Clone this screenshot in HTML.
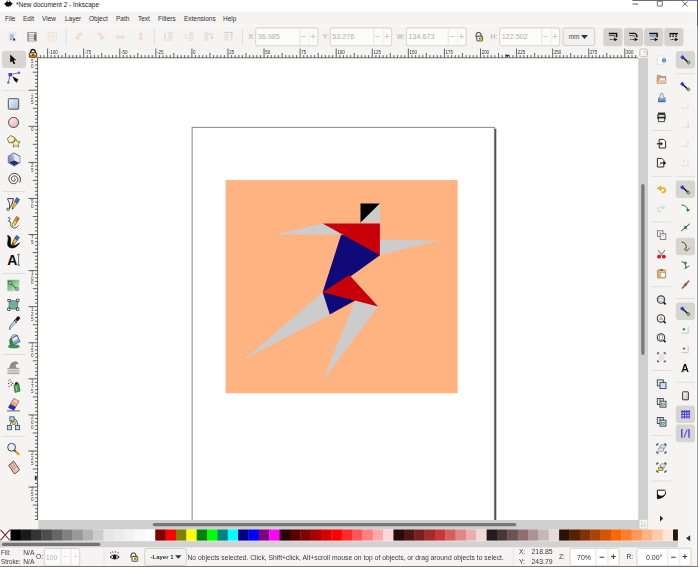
<!DOCTYPE html>
<html><head><meta charset="utf-8"><title>*New document 2 - Inkscape</title>
<style>
html,body{margin:0;padding:0;}
body{width:698px;height:567px;overflow:hidden;background:#f5f4f3;font-family:"Liberation Sans",sans-serif;position:relative;color:#2e3436;}
.a{position:absolute;}
.t{position:absolute;white-space:nowrap;line-height:1;}
.m{position:absolute;white-space:nowrap;line-height:1;font-size:6.9px;top:16px;color:#30302f;transform:scaleX(0.94);transform-origin:0 0;}
.sep{position:absolute;background:#e2e0dd;}
.fld{position:absolute;box-sizing:border-box;border:1px solid #d6d3cf;border-radius:2.5px;background:#fbfbfa;}
.btn{position:absolute;box-sizing:border-box;border-radius:3px;background:#d8d4d0;}
svg{position:absolute;overflow:visible;}
</style></head><body>

<svg style="left:0;top:0" width="698" height="567" viewBox="0 0 698 567"><rect x="0.00" y="0.00" width="698.00" height="12.00" fill="#fff"/><rect x="632.30" y="0.00" width="53.40" height="0.80" fill="#4a4a4a"/><rect x="685.70" y="0.00" width="12.30" height="1.00" fill="#7878f0"/></svg>
<svg style="left:4.1px;top:-0.9px" width="9" height="9" viewBox="0 0 11 10"><path d="M5.5 0.3 L10.3 5 Q10.8 5.8 9.8 6.2 L8.6 6.8 Q8 7.4 8.8 7.8 L7.4 8.6 L6.2 8 L5.2 9.6 L4 8.4 L2.4 8.8 Q1.6 8.2 2.6 7.4 L1 6.4 Q0.2 5.8 0.8 5 Z" fill="#111"/><path d="M5.5 0.6 L7.6 2.9 L6.4 2.7 L5.6 3.5 L4.8 2.6 L3.4 3Z" fill="#fff"/></svg>
<div class="t" style="left:16.2px;top:0.5px;font-size:7.3px;transform:scaleX(0.89);transform-origin:0 0;color:#222">*New document 2 - Inkscape</div>
<svg style="left:0;top:0" width="698" height="567" viewBox="0 0 698 567"><rect x="632.60" y="3.60" width="5.60" height="0.90" fill="#444"/></svg>
<svg style="left:0;top:0" width="698" height="12" viewBox="0 0 698 12"><rect x="657.3" y="1.2" width="5" height="4.9" rx="0.5" fill="none" stroke="#444" stroke-width="0.8"/><path d="M682.4 1.3 L687.5 6.5 M687.5 1.3 L682.4 6.5" stroke="#444" stroke-width="0.8" fill="none"/></svg>
<div class="m" style="left:4.5px">File</div>
<div class="m" style="left:23px">Edit</div>
<div class="m" style="left:42px">View</div>
<div class="m" style="left:64.5px">Layer</div>
<div class="m" style="left:88.5px">Object</div>
<div class="m" style="left:116px">Path</div>
<div class="m" style="left:137.5px">Text</div>
<div class="m" style="left:157.5px">Filters</div>
<div class="m" style="left:183.5px">Extensions</div>
<div class="m" style="left:222.5px">Help</div>
<svg style="left:0;top:0" width="698" height="567" viewBox="0 0 698 567"><rect x="0.00" y="25.30" width="698.00" height="0.90" fill="#fbfbfa"/><rect x="65.70" y="29.00" width="1.00" height="16.00" fill="#e2e0dd"/><rect x="153.90" y="29.00" width="1.00" height="16.00" fill="#e2e0dd"/><rect x="242.00" y="29.00" width="1.00" height="16.00" fill="#e2e0dd"/></svg>
<div class="t" style="left:248.3px;top:33.9px;font-size:6.8px;color:#a9a8a6">X:</div>
<svg style="left:0;top:0" width="698" height="567" viewBox="0 0 698 567"><rect x="255.70" y="27.90" width="62.30" height="17.90" rx="2.00" fill="#fbfbfa" stroke="#d6d3cf"/></svg>
<div class="t" style="left:257.8px;top:33px;font-size:7.2px;color:#b0afad">36.985</div>
<svg style="left:0;top:0" width="698" height="567" viewBox="0 0 698 567"><rect x="299.50" y="28.50" width="1.00" height="16.50" fill="#e6e4e1"/><rect x="308.80" y="28.50" width="1.00" height="16.50" fill="#f0eeec"/></svg>
<div class="t" style="left:300.9px;top:31.7px;font-size:10px;color:#cbc9c6">&#8722;</div>
<div class="t" style="left:310.3px;top:31.7px;font-size:10px;color:#cbc9c6">+</div>
<div class="t" style="left:322.8px;top:33.9px;font-size:6.8px;color:#a9a8a6">Y:</div>
<svg style="left:0;top:0" width="698" height="567" viewBox="0 0 698 567"><rect x="330.20" y="27.90" width="61.50" height="17.90" rx="2.00" fill="#fbfbfa" stroke="#d6d3cf"/></svg>
<div class="t" style="left:332.3px;top:33px;font-size:7.2px;color:#b0afad">53.276</div>
<svg style="left:0;top:0" width="698" height="567" viewBox="0 0 698 567"><rect x="373.20" y="28.50" width="1.00" height="16.50" fill="#e6e4e1"/><rect x="382.50" y="28.50" width="1.00" height="16.50" fill="#f0eeec"/></svg>
<div class="t" style="left:374.59999999999997px;top:31.7px;font-size:10px;color:#cbc9c6">&#8722;</div>
<div class="t" style="left:384.0px;top:31.7px;font-size:10px;color:#cbc9c6">+</div>
<div class="t" style="left:396.8px;top:33.9px;font-size:6.8px;color:#a9a8a6">W:</div>
<svg style="left:0;top:0" width="698" height="567" viewBox="0 0 698 567"><rect x="406.40" y="27.90" width="59.80" height="17.90" rx="2.00" fill="#fbfbfa" stroke="#d6d3cf"/></svg>
<div class="t" style="left:408.5px;top:33px;font-size:7.2px;color:#b0afad">134.673</div>
<svg style="left:0;top:0" width="698" height="567" viewBox="0 0 698 567"><rect x="447.70" y="28.50" width="1.00" height="16.50" fill="#e6e4e1"/><rect x="457.00" y="28.50" width="1.00" height="16.50" fill="#f0eeec"/></svg>
<div class="t" style="left:449.09999999999997px;top:31.7px;font-size:10px;color:#cbc9c6">&#8722;</div>
<div class="t" style="left:458.5px;top:31.7px;font-size:10px;color:#cbc9c6">+</div>
<div class="t" style="left:490.6px;top:33.9px;font-size:6.8px;color:#a9a8a6">H:</div>
<svg style="left:0;top:0" width="698" height="567" viewBox="0 0 698 567"><rect x="499.70" y="27.90" width="60.00" height="17.90" rx="2.00" fill="#fbfbfa" stroke="#d6d3cf"/></svg>
<div class="t" style="left:501.8px;top:33px;font-size:7.2px;color:#b0afad">122.502</div>
<svg style="left:0;top:0" width="698" height="567" viewBox="0 0 698 567"><rect x="541.20" y="28.50" width="1.00" height="16.50" fill="#e6e4e1"/><rect x="550.50" y="28.50" width="1.00" height="16.50" fill="#f0eeec"/></svg>
<div class="t" style="left:542.6px;top:31.7px;font-size:10px;color:#cbc9c6">&#8722;</div>
<div class="t" style="left:552.0px;top:31.7px;font-size:10px;color:#cbc9c6">+</div>
<svg style="left:0;top:0" width="698" height="567" viewBox="0 0 698 567"><rect x="563.10" y="28.00" width="31.60" height="17.50" rx="2.00" fill="#f3f2f0" stroke="#d2cfcb"/></svg>
<div class="t" style="left:568.8px;top:34px;font-size:6.4px;color:#444">mm</div>
<svg style="left:581px;top:34.5px" width="7" height="4" viewBox="0 0 7 4"><path d="M0 0 H7 L3.5 4 Z" fill="#2e3436"/></svg>
<svg style="left:0;top:0" width="698" height="567" viewBox="0 0 698 567"><rect x="603.30" y="28.00" width="19.20" height="18.20" rx="3.00" fill="#d6d2ce"/><rect x="623.90" y="28.00" width="19.20" height="18.20" rx="3.00" fill="#d6d2ce"/><rect x="644.10" y="28.00" width="19.20" height="18.20" rx="3.00" fill="#d6d2ce"/><rect x="664.20" y="28.00" width="19.20" height="18.20" rx="3.00" fill="#d6d2ce"/></svg>
<svg style="left:0;top:0" width="698" height="567" viewBox="0 0 698 567"><defs>
<linearGradient id="gb" x1="0" y1="0" x2="1" y2="1"><stop offset="0" stop-color="#f4f7fc"/><stop offset="1" stop-color="#9db4d6"/></linearGradient>
<linearGradient id="gp" x1="0" y1="0" x2="1" y2="1"><stop offset="0" stop-color="#fff4f4"/><stop offset="1" stop-color="#f2a8b0"/></linearGradient>
<linearGradient id="gg" x1="0" y1="0" x2="1" y2="1"><stop offset="0" stop-color="#3fa648"/><stop offset="1" stop-color="#d9efda"/></linearGradient>
<linearGradient id="gw" x1="0" y1="0" x2="1" y2="1"><stop offset="0" stop-color="#ffffff"/><stop offset="1" stop-color="#bdbdbd"/></linearGradient>
<linearGradient id="gy" x1="0" y1="0" x2="0" y2="1"><stop offset="0" stop-color="#ffe680"/><stop offset="1" stop-color="#e0a000"/></linearGradient>
<g id="snapn"><path d="M-2.6 -2.3 L3 2.7" stroke="#111" stroke-width="1.4"/><path d="M-3 -4.9 L-0.8 -2.7 L-3 -0.5 L-5.2 -2.7Z" fill="#3434ee"/><path d="M3 0.5 L5.2 2.7 L3 4.9 L0.8 2.7Z" fill="#2e8b3a"/><circle cx="3" cy="2.7" r="0.8" fill="#a8dcae"/></g>
<g id="mag"><circle cx="0" cy="0" r="3.7" fill="#eef2f8" stroke="#3a3f4a" stroke-width="1.1"/><path d="M2.6 2.8 L4.6 4.8" stroke="#111" stroke-width="1.6"/></g>
<g id="dup"><rect x="-4.3" y="-4.3" width="6" height="6" fill="#dfe9f5" stroke="#3a4250" stroke-width="0.9"/><rect x="-1.6" y="-1.6" width="6" height="6" fill="#cfe0f2" stroke="#3a4250" stroke-width="0.9"/></g>
<g id="grp"><path d="M-4.5 -2.8 V-4.5 H-2.8 M2.8 -4.5 H4.5 V-2.8 M4.5 2.8 V4.5 H2.8 M-2.8 4.5 H-4.5 V2.8" stroke="#222" stroke-width="1" fill="none"/></g>
<linearGradient id="gbx" x1="1" y1="0" x2="0" y2="1"><stop offset="0" stop-color="#c3cfe6"/><stop offset="1" stop-color="#5f72b2"/></linearGradient></defs><g transform="translate(12.2 36.8)"><rect x="-3.7" y="-4.8" width="7.4" height="9.6" rx="0.8" fill="#f0f0f4" stroke="#e2e2e6" stroke-width="0.5"/><rect x="-2.4" y="-3" width="4.2" height="5.4" fill="#aac2ee"/><rect x="1" y="1.8" width="1.9" height="1.9" fill="#222"/><rect x="-2.2" y="2" width="1.5" height="1.3" fill="#6a86c8"/></g><g transform="translate(32 36.8)"><rect x="-4.9" y="-4.7" width="9.8" height="9.4" rx="1" fill="#9a9a9a"/><rect x="-3.2" y="-3.8" width="5.6" height="7.6" fill="#f4f4f4"/><path d="M-3.2 -2 H2.4 M-3.2 0 H2.4 M-3.2 2 H2.4" stroke="#8a8a8a" stroke-width="0.7"/><rect x="2.3" y="-2.2" width="1.1" height="5.6" fill="#4a4a4a"/></g><g transform="translate(52.3 36.8)"><rect x="-4.2" y="-4.4" width="8.4" height="8.8" fill="#f4efea" stroke="#f2dfd0" stroke-width="0.8"/><path d="M0 -3 L3 0 L0 2.6 L-3 0Z" fill="#ecebea"/></g><g transform="translate(79 37)"><path d="M3 -3.4 Q-1.6 -3.2 -1.5 0.6" stroke="#efdccb" stroke-width="2.3" fill="none"/><path d="M-4.4 -0.2 H1.4 L-1.5 3.8Z" fill="#efdccb"/></g><g transform="translate(100.6 37)"><path d="M-3 -3.4 Q1.6 -3.2 1.5 0.6" stroke="#efdccb" stroke-width="2.3" fill="none"/><path d="M4.4 -0.2 H-1.4 L1.5 3.8Z" fill="#efdccb"/></g><g transform="translate(120.3 37)"><path d="M-4.8 0 L-1.6 -2.9 V2.9Z M4.8 0 L1.6 -2.9 V2.9Z" fill="#efdccb"/><rect x="-2" y="-1.1" width="4" height="2.2" fill="#efdccb"/></g><g transform="translate(140.8 36.6)"><path d="M0 -4.6 L-2.9 -1.5 H2.9Z M0 4.6 L-2.9 1.5 H2.9Z" fill="#efdccb"/><rect x="-1.1" y="-2" width="2.2" height="4" fill="#efdccb"/></g><g transform="translate(168.2 36.6)"><path d="M0 -4 H4.4 M0 -2.2 H4.4 M0 -0.4 H4.4 M0 1.4 H4.4" stroke="#d9d9d9" stroke-width="1"/><path d="M-3.2 -4 V1" stroke="#cfcfcf" stroke-width="0.9"/><path d="M-4.4 0.4 H-2 L-3.2 2Z" fill="#c8c8c8"/><path d="M-4.6 3.4 H4.4" stroke="#f0ddc8" stroke-width="1.1"/></g><g transform="translate(188.8 36.6)"><path d="M0.4 -4 H4.4 M0.4 -2.2 H4.4 M0.4 -0.4 H4.4 M0.4 3.6 H4.4" stroke="#d9d9d9" stroke-width="1"/><path d="M-3 -3 V0" stroke="#cfcfcf" stroke-width="0.9"/><path d="M-4.4 1.6 H4.4" stroke="#f0ddc8" stroke-width="1.1"/></g><g transform="translate(208.8 36.6)"><path d="M-4.4 -4 H-0.6 M-4.4 -0.4 H-0.6 M-4.4 1.4 H-0.6 M-4.4 3.4 H-0.6" stroke="#d9d9d9" stroke-width="1"/><path d="M-4.4 -2.2 H4.4" stroke="#dcdcdc" stroke-width="1.1"/><path d="M3 -1 V2" stroke="#cfcfcf" stroke-width="0.9"/><path d="M1.8 1 H4.2 L3 2.6Z" fill="#c8c8c8"/></g><g transform="translate(228.8 36.6)"><path d="M-4.4 -4.2 H4.4" stroke="#d0d0d0" stroke-width="1.1"/><path d="M-4.4 -2.2 H-0.4 M-4.4 -0.4 H-0.4 M-4.4 1.4 H-0.4 M-4.4 3.4 H-0.4" stroke="#d9d9d9" stroke-width="1"/><path d="M3 -2 V3.6" stroke="#cfcfcf" stroke-width="0.9"/><path d="M1.8 -1.6 H4.2 L3 -3.2Z" fill="#c8c8c8"/></g><g transform="translate(479.4 37)"><path d="M-3.2 0 V-2.6 Q-3 -4.6 -0.6 -4.6 Q1.7 -4.6 1.9 -1" stroke="#2a2a2a" stroke-width="1" fill="none"/><rect x="-2.6" y="-0.8" width="5.8" height="4.7" rx="0.6" fill="#fff" stroke="#2a2a2a" stroke-width="0.9"/><rect x="0.7" y="0" width="2.1" height="3.4" fill="#e8c61e"/><rect x="-0.3" y="0.9" width="1.1" height="1.5" fill="#222"/></g><g transform="translate(613 36.6)"><path d="M-4.2 -3.2 H3.6 V0.6" stroke="#111" stroke-width="1.5" fill="none"/><path d="M-4.2 -1 H1.6 V0.6" stroke="#555" stroke-width="1" fill="none"/><path d="M-3.2 2.9 H1.6" stroke="#222" stroke-width="0.9" stroke-dasharray="1 0.5"/><path d="M1.2 1.1 L4.6 2.9 L1.2 4.7Z" fill="#111"/></g><g transform="translate(633.4 36.6)"><path d="M-4.2 -3.2 H0.6 Q3.6 -3.2 3.6 0.6" stroke="#111" stroke-width="1.4" fill="none"/><path d="M-4.2 -1 H-0.4 Q1.6 -1 1.6 0.6" stroke="#555" stroke-width="1" fill="none"/><path d="M-3.2 2.9 H1.6" stroke="#222" stroke-width="0.9" stroke-dasharray="1 0.5"/><path d="M1.2 1.1 L4.6 2.9 L1.2 4.7Z" fill="#111"/></g><g transform="translate(653.5 36.6)"><rect x="-4" y="-1.6" width="6.4" height="2.2" fill="#7ba7de"/><path d="M-4.2 -3.2 H3.6 V0.6" stroke="#111" stroke-width="1.5" fill="none"/><path d="M-3.2 2.9 H1.6" stroke="#222" stroke-width="0.9" stroke-dasharray="1 0.5"/><path d="M1.2 1.1 L4.6 2.9 L1.2 4.7Z" fill="#111"/></g><g transform="translate(673.7 36.6)"><path d="M-4.2 -3 H4.2" stroke="#111" stroke-width="1.4"/><path d="M-3.4 -2.4 V0.4 M-0.6 -2.4 V0.4 M2.4 -2.4 V0.4" stroke="#111" stroke-width="1.5" stroke-dasharray="1.2 0.5"/><path d="M-3.2 2.9 H1.6" stroke="#222" stroke-width="0.9" stroke-dasharray="1 0.5"/><path d="M1.2 1.1 L4.6 2.9 L1.2 4.7Z" fill="#111"/></g></svg>
<svg style="left:0;top:0" width="698" height="567" viewBox="0 0 698 567"><rect x="2.10" y="50.70" width="24.00" height="17.20" rx="3.00" fill="#d8d4d0"/><rect x="2.50" y="90.20" width="23.00" height="1.00" fill="#e0deda"/><rect x="2.50" y="191.00" width="23.00" height="1.00" fill="#e0deda"/><rect x="2.50" y="273.00" width="23.00" height="1.00" fill="#e0deda"/><rect x="2.50" y="354.00" width="23.00" height="1.00" fill="#e0deda"/><rect x="2.50" y="436.00" width="23.00" height="1.00" fill="#e0deda"/></svg>
<svg style="left:0;top:0" width="698" height="567" viewBox="0 0 698 567"><g transform="translate(0 0)"><path d="M10.2 54.4 L10.2 62.6 L12.1 60.9 L13.7 64.3 L15.2 63.6 L13.6 60.3 L16.3 60.2Z" fill="#0a0a0a"/></g><g transform="translate(0 0)"><path d="M10.2 74.6 L18.6 72.8 M10.2 74.6 L8.3 82.4" stroke="#444" stroke-width="0.7"/><rect x="8.5" y="73" width="3.5" height="3.3" fill="#3a3af0"/><circle cx="19" cy="72.7" r="1.2" fill="#5a5af0"/><circle cx="8.3" cy="82.6" r="1.2" fill="#5a5af0"/><path d="M12.4 76.2 L18.4 79.4 L16.6 82.8 L14.4 80.6Z" fill="#0a0a0a"/></g><rect x="8.3" y="98.7" width="10.4" height="10.5" rx="0.6" fill="url(#gb)" stroke="#3c3c3c" stroke-width="0.85"/><circle cx="13.6" cy="122.4" r="5" fill="url(#gp)" stroke="#303030" stroke-width="0.9"/><path d="M10.6 135.5 L14.8 137.6 L14.2 142.2 L9.2 143 L7.3 138.8Z" fill="#f6eeaa" stroke="#4a4a38" stroke-width="0.7"/><path d="M10 138 L12.8 138.6 L12.4 141.2 L10 141.4Z" fill="#f4f3f0"/><path d="M15.8 138.8 L17.2 141.5 L20.3 141.9 L18.1 144 L18.7 147 L15.9 145.6 L13.2 147.1 L13.7 144.1 L11.5 142 L14.5 141.5Z" fill="#f2dc60" stroke="#4a4a38" stroke-width="0.6"/><path d="M15.8 141.2 L16.6 142.6 L18.2 142.9 L17 144 L17.3 145.4 L15.9 144.7 L14.6 145.4 L14.9 144 L13.8 142.9 L15.2 142.6Z" fill="#fdf9cc"/><path d="M13.8 152.9 L19.8 156.2 V162.8 L14.2 166 L8.3 162.6 V156.2Z" fill="#e3eaf5" stroke="#44464e" stroke-width="0.8" stroke-linejoin="round"/><path d="M13.8 153.2 L14.4 159.4 L14.2 165.6 L8.6 162.4 V156.3Z" fill="url(#gbx)"/><path d="M9.4 162.5 L14.3 160.5 L19 162.7 L14.2 165.5Z" fill="#2a2a72"/><path d="M14.4 159.4 L19.5 156.6 V162.3Z" fill="#dfe7f3"/><path d="M14.40 178.51 L14.56 178.54 L14.72 178.60 L14.88 178.70 L15.02 178.84 L15.14 179.01 L15.23 179.22 L15.28 179.45 L15.28 179.69 L15.24 179.95 L15.14 180.20 L14.99 180.44 L14.79 180.66 L14.55 180.85 L14.26 180.99 L13.94 181.08 L13.59 181.11 L13.24 181.08 L12.88 180.98 L12.54 180.80 L12.22 180.57 L11.94 180.27 L11.72 179.91 L11.56 179.51 L11.47 179.07 L11.46 178.61 L11.54 178.14 L11.70 177.69 L11.95 177.26 L12.28 176.87 L12.69 176.54 L13.15 176.28 L13.67 176.10 L14.23 176.02 L14.80 176.04 L15.38 176.16 L15.93 176.39 L16.44 176.72 L16.90 177.15 L17.28 177.66 L17.57 178.24 L17.75 178.88 L17.83 179.55 L17.77 180.24 L17.60 180.92 L17.30 181.56 L16.88 182.16 L16.36 182.68 L15.74 183.11 L15.04 183.42 L14.29 183.61 L13.50 183.67 L12.70 183.58 L11.92 183.35 L11.18 182.98 L10.51 182.47 L9.93 181.85 L9.46 181.12 L9.12 180.30 L8.93 179.43 L8.90 178.53 L9.02 177.62 L9.32 176.74 L9.76 175.91 L10.36 175.16 L11.09 174.52 L11.93 174.01 L12.86 173.66 L13.85 173.47 L14.87 173.46 L15.89 173.64 L16.87 173.99 L17.79 174.52 L18.61 175.21 L19.30 176.05 L19.84 177.00 L20.20 178.05 L20.38 179.16 L20.36 180.29 L20.14 181.42 L19.72 182.50" fill="none" stroke="#303030" stroke-width="0.95"/><path d="M7.6 198.6 H13.4 C12.6 203 11.4 206.6 9 208.6 L7.6 209.6" fill="none" stroke="#222" stroke-width="0.9"/><path d="M7.4 198.6 Q10.6 203.6 9.6 208.6" fill="none" stroke="#222" stroke-width="0.8"/><rect x="7" y="208.2" width="2.2" height="2" fill="#fff" stroke="#222" stroke-width="0.6"/><path d="M16.6 197.6 L19.6 199.6 L17.4 203.4 L14.6 201.4Z" fill="#3a6fd0" stroke="#1c2c50" stroke-width="0.5"/><path d="M14.6 201.4 L17.4 203.4 L13 208.6 L12.2 208.2Z" fill="#f1c232" stroke="#4a3a10" stroke-width="0.5"/><path d="M12.6 207.4 L13.6 208 L11.6 210Z" fill="#111"/><path d="M7.8 218.2 Q9.6 216.6 10 218.4 Q10.2 220 8.4 221.2 Q11 221 10.6 223.6 Q10.2 227 13.4 228 Q16.8 228.6 18.6 225.4" fill="none" stroke="#333" stroke-width="0.8"/><path d="M16.6 216.4 L19.2 218.2 L15 225.4 L12.4 226.2 L12.6 223.4Z" fill="#f6d33c" stroke="#3a2a10" stroke-width="0.6"/><path d="M17.4 217 L19.2 218.2 L17 222 L15 220.8Z" fill="#e8641a"/><path d="M12.6 223.6 L14.8 225.2 L12.4 226.2Z" fill="#f3e3c3"/><path d="M7.6 235.4 Q11.4 236.4 10.6 240.6 Q9.8 244.6 12 245.4 Q15.4 246.2 19.6 243 Q15.6 248.8 10.6 247.8 Q6.6 246.6 8 241 Q8.8 237.4 7.6 235.4Z" fill="#0a0a0a" stroke="#0a0a0a" stroke-width="0.7"/><path d="M16.4 235.4 L19.4 237.2 L17.6 240 L14.6 238.4Z" fill="#3a6fd0" stroke="#1c2c50" stroke-width="0.5"/><path d="M14.6 238.4 L17.6 240 L14.4 244 L12.4 244.8 L12.6 242.4Z" fill="#f1c232" stroke="#3a2a10" stroke-width="0.6"/><path d="M12.6 242.6 L14.2 243.8 L12.2 245Z" fill="#b01818"/><text x="7.3" y="264.6" font-size="14" font-weight="bold" fill="#0a0a0a" font-family="Liberation Sans, sans-serif">A</text><path d="M18.6 254.6 V265 M17.3 254.4 H19.9 M17.3 265.2 H19.9" stroke="#333" stroke-width="0.7" fill="none"/><rect x="7.4" y="279.8" width="12" height="11.4" fill="url(#gg)"/><path d="M10 283 L17 289" stroke="#333" stroke-width="0.8"/><rect x="8.9" y="281.8" width="2.2" height="2.2" fill="#e8e8e8" stroke="#333" stroke-width="0.6"/><rect x="15.9" y="287.9" width="2.2" height="2.2" fill="#e8e8e8" stroke="#333" stroke-width="0.6"/><path d="M9.4 300.4 L18 301 L17.4 309.2 L8.8 308.8Z" fill="#68ad9f" stroke="#2a4a44" stroke-width="0.6"/><path d="M11.4 300.6 L17.8 306 M8.9 304 L15 309.1" stroke="#7fc2b4" stroke-width="0.6"/><rect x="7.9" y="299.3" width="2.3" height="2.3" fill="#fff" stroke="#222" stroke-width="0.7"/><rect x="16.7" y="299.2" width="2.3" height="2.3" fill="#fff" stroke="#222" stroke-width="0.7"/><rect x="16.6" y="308" width="2.3" height="2.3" fill="#fff" stroke="#222" stroke-width="0.7"/><rect x="7.7" y="308.1" width="2.3" height="2.3" fill="#fff" stroke="#222" stroke-width="0.7"/><path d="M17.4 316.4 Q19.8 316 20.2 318.4 L17.4 321.6 L15 319.4Z" fill="#1a1a1a"/><path d="M14.4 319.6 L17.2 322.2 L16.4 323 L13.6 320.4Z" fill="#333"/><path d="M14.4 320.8 L16.2 322.4 L11 327.6 L9.8 328.8 L9.4 328.4 L10 326Z" fill="#cfdff2" stroke="#334" stroke-width="0.6"/><circle cx="9.8" cy="329" r="0.9" fill="#5b86c8"/><ellipse cx="13.8" cy="346.4" rx="5.6" ry="1.6" fill="#3ca24a" stroke="#1e5a28" stroke-width="0.5"/><path d="M10.6 338.4 L17.2 335.2 L20 341.6 L13.6 344.8Z" fill="#7fa8dc" stroke="#2a3f5c" stroke-width="0.7"/><path d="M11.4 339 L16.8 336.4 L18 339 L12.6 341.8Z" fill="#e2ecf8"/><path d="M10.6 338.4 Q8.6 339.6 10.6 345.8 L12.6 345.6 Q11.6 341.6 12.2 339.4Z" fill="#2f8f3f" stroke="#1e5a28" stroke-width="0.5"/><path d="M11 337 Q13 333.6 16.6 335" fill="none" stroke="#445" stroke-width="0.7"/><path d="M7.4 368.4 H19.4 M7.4 370.2 H19.4 M7.4 372 H19.4 M7.4 373.6 H19.4" stroke="#9a9a9a" stroke-width="0.9"/><path d="M9.4 368.6 Q9.6 361.8 15 361.2 Q18.6 361.4 18.2 364.4 Q16.8 363.4 15.8 364.4 Q15 365.8 17.4 368.6Z" fill="#8c8c8c"/><path d="M14 385.2 L18.6 383.6 L20 391 L15.2 392.4Z" fill="#3fae43" stroke="#1e4a22" stroke-width="0.7"/><path d="M14.6 385 L15.2 382.4 L17.4 381.8 L18 383.8Z" fill="#2a2a2a"/><path d="M16 386 L16.8 391.4" stroke="#a8e0aa" stroke-width="0.8"/><path d="M8.4 380.8 h1 M10.4 382.2 h1.2 M8 383.6 h1.2 M10.6 385 h1.4 M8.6 386.6 h1 M12 383.4 h1.2 M9.6 379.6 h0.8" stroke="#222" stroke-width="0.9"/><path d="M13.8 398.4 L19 401.2 L15.6 407.2 L10.2 404.4Z" fill="#f3a48a" stroke="#5a3a3a" stroke-width="0.5"/><path d="M10.2 404.4 L15.6 407.2 L13.8 410.2 L8.4 407.4Z" fill="#1f2fd8" stroke="#15206a" stroke-width="0.5"/><path d="M14.6 399.4 L18 401.2 L16.6 403.4 L13.2 401.6Z" fill="#f9cdb8"/><path d="M7 410.9 H20" stroke="#222" stroke-width="0.7"/><path d="M11.8 421 L9.4 426 M14 419 Q17.6 419.4 17.6 425.6" stroke="#222" stroke-width="0.8" fill="none"/><rect x="9.9" y="416.8" width="4.2" height="4.2" fill="#bcd4f0" stroke="#2a3a5a" stroke-width="0.7"/><rect x="7.3" y="425.6" width="4.2" height="4.2" fill="#bcd4f0" stroke="#2a3a5a" stroke-width="0.7"/><rect x="15.5" y="425.6" width="4.2" height="4.2" fill="#bcd4f0" stroke="#2a3a5a" stroke-width="0.7"/><rect x="12.3" y="421.8" width="3" height="2.6" fill="#f1d23a" stroke="#5a4a10" stroke-width="0.5"/><path d="M14.4 450.2 L18.6 454.2" stroke="#e8901a" stroke-width="2.2" stroke-linecap="round"/><path d="M13.6 449.6 L15.4 451.4" stroke="#444" stroke-width="1.6"/><circle cx="11.6" cy="447.3" r="3.9" fill="#e4eefa" stroke="#3a4456" stroke-width="1"/><path d="M9.4 446.4 Q10 444.6 12 444.6" stroke="#fff" stroke-width="0.9" fill="none"/><path d="M8.6 465.4 L13.6 461 L19.6 469.8 L14.6 474Z" fill="#f2c6ae" stroke="#3a3030" stroke-width="0.8"/><path d="M10.4 464 L11.8 465.6 M12 462.6 L13 463.8 M11.6 466.2 L13.4 468.2 M13.6 464.8 L14.6 466 M12.8 468 L14.6 470.2 M14.8 466.6 L15.8 467.8" stroke="#5a4040" stroke-width="0.6"/></svg>
<svg style="left:0;top:0;will-change:transform" width="698" height="567" viewBox="0 0 698 567">
<rect x="37.3" y="57.5" width="600.5" height="1" fill="#3a3a3a"/>
<rect x="37.3" y="57.5" width="1" height="462.5" fill="#3a3a3a"/>
<path d="M40.38 57.8V55.10M43.99 57.8V55.10M47.60 57.8V48.50M51.21 57.8V55.10M54.81 57.8V55.10M58.42 57.8V55.10M62.03 57.8V55.10M65.64 57.8V52.90M69.25 57.8V55.10M72.85 57.8V55.10M76.46 57.8V55.10M80.07 57.8V55.10M83.67 57.8V48.50M87.28 57.8V55.10M90.89 57.8V55.10M94.50 57.8V55.10M98.11 57.8V55.10M101.71 57.8V52.90M105.32 57.8V55.10M108.93 57.8V55.10M112.53 57.8V55.10M116.14 57.8V55.10M119.75 57.8V48.50M123.36 57.8V55.10M126.97 57.8V55.10M130.57 57.8V55.10M134.18 57.8V55.10M137.79 57.8V52.90M141.40 57.8V55.10M145.00 57.8V55.10M148.61 57.8V55.10M152.22 57.8V55.10M155.82 57.8V48.50M159.43 57.8V55.10M163.04 57.8V55.10M166.65 57.8V55.10M170.25 57.8V55.10M173.86 57.8V52.90M177.47 57.8V55.10M181.08 57.8V55.10M184.69 57.8V55.10M188.29 57.8V55.10M191.90 57.8V48.50M195.51 57.8V55.10M199.12 57.8V55.10M202.72 57.8V55.10M206.33 57.8V55.10M209.94 57.8V52.90M213.55 57.8V55.10M217.15 57.8V55.10M220.76 57.8V55.10M224.37 57.8V55.10M227.98 57.8V48.50M231.58 57.8V55.10M235.19 57.8V55.10M238.80 57.8V55.10M242.41 57.8V55.10M246.01 57.8V52.90M249.62 57.8V55.10M253.23 57.8V55.10M256.84 57.8V55.10M260.44 57.8V55.10M264.05 57.8V48.50M267.66 57.8V55.10M271.26 57.8V55.10M274.87 57.8V55.10M278.48 57.8V55.10M282.09 57.8V52.90M285.69 57.8V55.10M289.30 57.8V55.10M292.91 57.8V55.10M296.52 57.8V55.10M300.12 57.8V48.50M303.73 57.8V55.10M307.34 57.8V55.10M310.95 57.8V55.10M314.56 57.8V55.10M318.16 57.8V52.90M321.77 57.8V55.10M325.38 57.8V55.10M328.99 57.8V55.10M332.59 57.8V55.10M336.20 57.8V48.50M339.81 57.8V55.10M343.42 57.8V55.10M347.02 57.8V55.10M350.63 57.8V55.10M354.24 57.8V52.90M357.85 57.8V55.10M361.45 57.8V55.10M365.06 57.8V55.10M368.67 57.8V55.10M372.27 57.8V48.50M375.88 57.8V55.10M379.49 57.8V55.10M383.10 57.8V55.10M386.71 57.8V55.10M390.31 57.8V52.90M393.92 57.8V55.10M397.53 57.8V55.10M401.13 57.8V55.10M404.74 57.8V55.10M408.35 57.8V48.50M411.96 57.8V55.10M415.57 57.8V55.10M419.17 57.8V55.10M422.78 57.8V55.10M426.39 57.8V52.90M430.00 57.8V55.10M433.60 57.8V55.10M437.21 57.8V55.10M440.82 57.8V55.10M444.43 57.8V48.50M448.03 57.8V55.10M451.64 57.8V55.10M455.25 57.8V55.10M458.86 57.8V55.10M462.46 57.8V52.90M466.07 57.8V55.10M469.68 57.8V55.10M473.28 57.8V55.10M476.89 57.8V55.10M480.50 57.8V48.50M484.11 57.8V55.10M487.72 57.8V55.10M491.32 57.8V55.10M494.93 57.8V55.10M498.54 57.8V52.90M502.14 57.8V55.10M505.75 57.8V55.10M509.36 57.8V55.10M512.97 57.8V55.10M516.58 57.8V48.50M520.18 57.8V55.10M523.79 57.8V55.10M527.40 57.8V55.10M531.00 57.8V55.10M534.61 57.8V52.90M538.22 57.8V55.10M541.83 57.8V55.10M545.44 57.8V55.10M549.04 57.8V55.10M552.65 57.8V48.50M556.26 57.8V55.10M559.87 57.8V55.10M563.47 57.8V55.10M567.08 57.8V55.10M570.69 57.8V52.90M574.30 57.8V55.10M577.90 57.8V55.10M581.51 57.8V55.10M585.12 57.8V55.10M588.73 57.8V48.50M592.33 57.8V55.10M595.94 57.8V55.10M599.55 57.8V55.10M603.15 57.8V55.10M606.76 57.8V52.90M610.37 57.8V55.10M613.98 57.8V55.10M617.59 57.8V55.10M621.19 57.8V55.10M624.80 57.8V48.50M628.41 57.8V55.10M632.01 57.8V55.10M635.62 57.8V55.10" stroke="#262626" stroke-width="0.7" fill="none"/>
<text x="48.8" y="53.8" font-size="4.45" fill="#333" font-family="Liberation Sans, sans-serif">-100</text>
<text x="84.9" y="53.8" font-size="4.45" fill="#333" font-family="Liberation Sans, sans-serif">-75</text>
<text x="121.0" y="53.8" font-size="4.45" fill="#333" font-family="Liberation Sans, sans-serif">-50</text>
<text x="157.0" y="53.8" font-size="4.45" fill="#333" font-family="Liberation Sans, sans-serif">-25</text>
<text x="193.1" y="53.8" font-size="4.45" fill="#333" font-family="Liberation Sans, sans-serif">0</text>
<text x="229.2" y="53.8" font-size="4.45" fill="#333" font-family="Liberation Sans, sans-serif">25</text>
<text x="265.2" y="53.8" font-size="4.45" fill="#333" font-family="Liberation Sans, sans-serif">50</text>
<text x="301.3" y="53.8" font-size="4.45" fill="#333" font-family="Liberation Sans, sans-serif">75</text>
<text x="337.4" y="53.8" font-size="4.45" fill="#333" font-family="Liberation Sans, sans-serif">100</text>
<text x="373.5" y="53.8" font-size="4.45" fill="#333" font-family="Liberation Sans, sans-serif">125</text>
<text x="409.6" y="53.8" font-size="4.45" fill="#333" font-family="Liberation Sans, sans-serif">150</text>
<text x="445.6" y="53.8" font-size="4.45" fill="#333" font-family="Liberation Sans, sans-serif">175</text>
<text x="481.7" y="53.8" font-size="4.45" fill="#333" font-family="Liberation Sans, sans-serif">200</text>
<text x="517.8" y="53.8" font-size="4.45" fill="#333" font-family="Liberation Sans, sans-serif">225</text>
<text x="553.9" y="53.8" font-size="4.45" fill="#333" font-family="Liberation Sans, sans-serif">250</text>
<text x="589.9" y="53.8" font-size="4.45" fill="#333" font-family="Liberation Sans, sans-serif">275</text>
<text x="626.0" y="53.8" font-size="4.45" fill="#333" font-family="Liberation Sans, sans-serif">300</text>
<path d="M37.7 61.37H35.00M37.7 64.97H35.00M37.7 68.58H35.00M37.7 72.19H32.80M37.7 75.79H35.00M37.7 79.40H35.00M37.7 83.01H35.00M37.7 86.62H35.00M37.7 90.22H28.40M37.7 93.83H35.00M37.7 97.44H35.00M37.7 101.05H35.00M37.7 104.66H35.00M37.7 108.26H32.80M37.7 111.87H35.00M37.7 115.48H35.00M37.7 119.08H35.00M37.7 122.69H35.00M37.7 126.30H28.40M37.7 129.91H35.00M37.7 133.51H35.00M37.7 137.12H35.00M37.7 140.73H35.00M37.7 144.34H32.80M37.7 147.94H35.00M37.7 151.55H35.00M37.7 155.16H35.00M37.7 158.77H35.00M37.7 162.38H28.40M37.7 165.98H35.00M37.7 169.59H35.00M37.7 173.20H35.00M37.7 176.81H35.00M37.7 180.41H32.80M37.7 184.02H35.00M37.7 187.63H35.00M37.7 191.23H35.00M37.7 194.84H35.00M37.7 198.45H28.40M37.7 202.06H35.00M37.7 205.66H35.00M37.7 209.27H35.00M37.7 212.88H35.00M37.7 216.49H32.80M37.7 220.09H35.00M37.7 223.70H35.00M37.7 227.31H35.00M37.7 230.92H35.00M37.7 234.53H28.40M37.7 238.13H35.00M37.7 241.74H35.00M37.7 245.35H35.00M37.7 248.96H35.00M37.7 252.56H32.80M37.7 256.17H35.00M37.7 259.78H35.00M37.7 263.39H35.00M37.7 266.99H35.00M37.7 270.60H28.40M37.7 274.21H35.00M37.7 277.82H35.00M37.7 281.42H35.00M37.7 285.03H35.00M37.7 288.64H32.80M37.7 292.25H35.00M37.7 295.85H35.00M37.7 299.46H35.00M37.7 303.07H35.00M37.7 306.68H28.40M37.7 310.28H35.00M37.7 313.89H35.00M37.7 317.50H35.00M37.7 321.11H35.00M37.7 324.71H32.80M37.7 328.32H35.00M37.7 331.93H35.00M37.7 335.54H35.00M37.7 339.14H35.00M37.7 342.75H28.40M37.7 346.36H35.00M37.7 349.97H35.00M37.7 353.57H35.00M37.7 357.18H35.00M37.7 360.79H32.80M37.7 364.40H35.00M37.7 368.00H35.00M37.7 371.61H35.00M37.7 375.22H35.00M37.7 378.83H28.40M37.7 382.43H35.00M37.7 386.04H35.00M37.7 389.65H35.00M37.7 393.25H35.00M37.7 396.86H32.80M37.7 400.47H35.00M37.7 404.08H35.00M37.7 407.69H35.00M37.7 411.29H35.00M37.7 414.90H28.40M37.7 418.51H35.00M37.7 422.12H35.00M37.7 425.72H35.00M37.7 429.33H35.00M37.7 432.94H32.80M37.7 436.55H35.00M37.7 440.15H35.00M37.7 443.76H35.00M37.7 447.37H35.00M37.7 450.98H28.40M37.7 454.58H35.00M37.7 458.19H35.00M37.7 461.80H35.00M37.7 465.41H35.00M37.7 469.01H32.80M37.7 472.62H35.00M37.7 476.23H35.00M37.7 479.84H35.00M37.7 483.44H35.00M37.7 487.05H28.40M37.7 490.66H35.00M37.7 494.27H35.00M37.7 497.87H35.00M37.7 501.48H35.00M37.7 505.09H32.80M37.7 508.70H35.00M37.7 512.30H35.00M37.7 515.91H35.00M37.7 519.52H35.00" stroke="#262626" stroke-width="0.7" fill="none"/>
<text x="32.3" y="63.2" text-anchor="middle" font-size="4.6" fill="#3a3a3a" font-family="Liberation Sans, sans-serif">5</text>
<text x="32.3" y="68.0" text-anchor="middle" font-size="4.6" fill="#3a3a3a" font-family="Liberation Sans, sans-serif">0</text>
<text x="32.3" y="94.6" text-anchor="middle" font-size="4.6" fill="#3a3a3a" font-family="Liberation Sans, sans-serif">-</text>
<text x="32.3" y="99.3" text-anchor="middle" font-size="4.6" fill="#3a3a3a" font-family="Liberation Sans, sans-serif">2</text>
<text x="32.3" y="104.0" text-anchor="middle" font-size="4.6" fill="#3a3a3a" font-family="Liberation Sans, sans-serif">5</text>
<text x="32.3" y="130.7" text-anchor="middle" font-size="4.6" fill="#3a3a3a" font-family="Liberation Sans, sans-serif">0</text>
<text x="32.3" y="166.8" text-anchor="middle" font-size="4.6" fill="#3a3a3a" font-family="Liberation Sans, sans-serif">2</text>
<text x="32.3" y="171.5" text-anchor="middle" font-size="4.6" fill="#3a3a3a" font-family="Liberation Sans, sans-serif">5</text>
<text x="32.3" y="202.9" text-anchor="middle" font-size="4.6" fill="#3a3a3a" font-family="Liberation Sans, sans-serif">5</text>
<text x="32.3" y="207.6" text-anchor="middle" font-size="4.6" fill="#3a3a3a" font-family="Liberation Sans, sans-serif">0</text>
<text x="32.3" y="238.9" text-anchor="middle" font-size="4.6" fill="#3a3a3a" font-family="Liberation Sans, sans-serif">7</text>
<text x="32.3" y="243.6" text-anchor="middle" font-size="4.6" fill="#3a3a3a" font-family="Liberation Sans, sans-serif">5</text>
<text x="32.3" y="275.0" text-anchor="middle" font-size="4.6" fill="#3a3a3a" font-family="Liberation Sans, sans-serif">1</text>
<text x="32.3" y="279.7" text-anchor="middle" font-size="4.6" fill="#3a3a3a" font-family="Liberation Sans, sans-serif">0</text>
<text x="32.3" y="284.4" text-anchor="middle" font-size="4.6" fill="#3a3a3a" font-family="Liberation Sans, sans-serif">0</text>
<text x="32.3" y="311.1" text-anchor="middle" font-size="4.6" fill="#3a3a3a" font-family="Liberation Sans, sans-serif">1</text>
<text x="32.3" y="315.8" text-anchor="middle" font-size="4.6" fill="#3a3a3a" font-family="Liberation Sans, sans-serif">2</text>
<text x="32.3" y="320.5" text-anchor="middle" font-size="4.6" fill="#3a3a3a" font-family="Liberation Sans, sans-serif">5</text>
<text x="32.3" y="347.2" text-anchor="middle" font-size="4.6" fill="#3a3a3a" font-family="Liberation Sans, sans-serif">1</text>
<text x="32.3" y="351.9" text-anchor="middle" font-size="4.6" fill="#3a3a3a" font-family="Liberation Sans, sans-serif">5</text>
<text x="32.3" y="356.6" text-anchor="middle" font-size="4.6" fill="#3a3a3a" font-family="Liberation Sans, sans-serif">0</text>
<text x="32.3" y="383.2" text-anchor="middle" font-size="4.6" fill="#3a3a3a" font-family="Liberation Sans, sans-serif">1</text>
<text x="32.3" y="387.9" text-anchor="middle" font-size="4.6" fill="#3a3a3a" font-family="Liberation Sans, sans-serif">7</text>
<text x="32.3" y="392.6" text-anchor="middle" font-size="4.6" fill="#3a3a3a" font-family="Liberation Sans, sans-serif">5</text>
<text x="32.3" y="419.3" text-anchor="middle" font-size="4.6" fill="#3a3a3a" font-family="Liberation Sans, sans-serif">2</text>
<text x="32.3" y="424.0" text-anchor="middle" font-size="4.6" fill="#3a3a3a" font-family="Liberation Sans, sans-serif">0</text>
<text x="32.3" y="428.7" text-anchor="middle" font-size="4.6" fill="#3a3a3a" font-family="Liberation Sans, sans-serif">0</text>
<text x="32.3" y="455.4" text-anchor="middle" font-size="4.6" fill="#3a3a3a" font-family="Liberation Sans, sans-serif">2</text>
<text x="32.3" y="460.1" text-anchor="middle" font-size="4.6" fill="#3a3a3a" font-family="Liberation Sans, sans-serif">2</text>
<text x="32.3" y="464.8" text-anchor="middle" font-size="4.6" fill="#3a3a3a" font-family="Liberation Sans, sans-serif">5</text>
<text x="32.3" y="491.4" text-anchor="middle" font-size="4.6" fill="#3a3a3a" font-family="Liberation Sans, sans-serif">2</text>
<text x="32.3" y="496.1" text-anchor="middle" font-size="4.6" fill="#3a3a3a" font-family="Liberation Sans, sans-serif">5</text>
<text x="32.3" y="500.8" text-anchor="middle" font-size="4.6" fill="#3a3a3a" font-family="Liberation Sans, sans-serif">0</text>
<path d="M504.9 54.8 h4.6 l-2.3 2.5z" fill="#222"/>
<path d="M34.8 475.6 v4.6 l2.5 -2.3z" fill="#222"/>
</svg>
<svg style="left:0;top:0" width="698" height="567" viewBox="0 0 698 567"><g transform="translate(33 53.5)"><path d="M-2.3 -0.4 V-1.6 Q-2.3 -4 0 -4 Q2.3 -4 2.3 -1.6 V-0.4" stroke="#151515" stroke-width="1.3" fill="none"/><rect x="-3.7" y="-0.8" width="7.4" height="4.6" rx="0.5" fill="url(#gy)" stroke="#1a1a1a" stroke-width="0.8"/><rect x="-3" y="1.6" width="6" height="1.6" fill="#d06a10"/><rect x="-0.6" y="0.2" width="1.2" height="2" fill="#2a1a00"/></g></svg>
<svg style="left:0;top:0" width="698" height="567" viewBox="0 0 698 567"><defs><clipPath id="cv"><rect x="38.2" y="58.4" width="600" height="461.6"/></clipPath></defs><rect x="38.2" y="58.4" width="600" height="461.6" fill="#fff"/><g clip-path="url(#cv)">
<rect x="494.4" y="128.8" width="1.9" height="400" fill="#505050"/>
<rect x="192.1" y="127.3" width="302.2" height="430" fill="#fff" stroke="#6a6a6a" stroke-width="0.8"/>
<rect x="225.6" y="180.1" width="232.1" height="213.2" fill="#ffb380"/>
<polygon points="360.5,203.4 380.0,203.4 360.5,222.8" fill="#000"/>
<polygon points="380.0,203.4 380.0,222.8 360.5,222.8" fill="#cccccc"/>
<polygon points="322.7,223.5 336.0,226.0 341.1,234.8 276.5,234.2" fill="#cccccc"/>
<polygon points="379.9,239.4 438.0,240.4 379.9,255.2" fill="#cccccc"/>
<polygon points="322.7,292.3 326.0,300.0 329.8,314.5 244.6,359.3" fill="#cccccc"/>
<polygon points="355.2,300.4 366.0,301.0 378.1,306.4 322.8,380.6" fill="#cccccc"/>
<polygon points="341.1,234.8 370.0,240.0 379.9,255.2 350.5,276.5 340.0,290.0 322.7,292.3" fill="#0f0a78"/>
<polygon points="322.7,292.3 340.0,293.0 355.2,300.4 329.8,314.5" fill="#0f0a78"/>
<polygon points="322.7,223.5 379.9,223.5 379.9,255.2" fill="#c8000a"/>
<polygon points="349.3,275.0 378.1,306.4 322.7,292.3" fill="#c8000a"/>
</g></svg>
<svg style="left:0;top:0" width="698" height="567" viewBox="0 0 698 567"><rect x="638.30" y="58.00" width="9.70" height="462.00" fill="#cfcfcf"/><rect x="641.20" y="184.00" width="3.30" height="171.00" rx="2.00" fill="#787878"/><rect x="38.30" y="520.00" width="609.70" height="9.40" fill="#cfcfcf"/><rect x="152.60" y="523.00" width="363.90" height="3.20" rx="2.00" fill="#787878"/><rect x="639.80" y="49.00" width="7.70" height="7.70" rx="1.50" fill="#f7f6f5" stroke="#c2bfbb"/></svg>
<svg style="left:0;top:0" width="698" height="567" viewBox="0 0 698 567"><rect x="639.6" y="519.8" width="7.8" height="8.8" fill="#f4f4f2"/><path d="M641.6 521.6 L645.8 524.2 L641.6 526.8Z" fill="none" stroke="#b8dcc0" stroke-width="0.7"/><circle cx="645" cy="525.8" r="1" fill="#f4c8c8"/><circle cx="642" cy="526.2" r="0.9" fill="#c8d4f4"/><path d="M643.4 52.8 a1.6 1.6 0 1 1 1.6 1.6" stroke="#b8b8b8" stroke-width="0.7" fill="none"/></svg>
<svg style="left:0;top:0" width="698" height="567" viewBox="0 0 698 567"><rect x="651.50" y="130.00" width="20.00" height="1.00" fill="#e0deda"/><rect x="651.50" y="175.80" width="20.00" height="1.00" fill="#e0deda"/><rect x="651.50" y="221.50" width="20.00" height="1.00" fill="#e0deda"/><rect x="651.50" y="286.20" width="20.00" height="1.00" fill="#e0deda"/><rect x="651.50" y="370.00" width="20.00" height="1.00" fill="#e0deda"/><rect x="651.50" y="435.00" width="20.00" height="1.00" fill="#e0deda"/><rect x="651.50" y="480.60" width="20.00" height="1.00" fill="#e0deda"/><rect x="676.00" y="73.20" width="19.00" height="1.00" fill="#e0deda"/><rect x="676.00" y="175.80" width="19.00" height="1.00" fill="#e0deda"/><rect x="676.00" y="298.00" width="19.00" height="1.00" fill="#e0deda"/><rect x="676.00" y="381.80" width="19.00" height="1.00" fill="#e0deda"/><rect x="675.80" y="50.90" width="19.20" height="17.60" rx="3.00" fill="#d8d4d0"/><rect x="675.80" y="180.50" width="19.20" height="17.60" rx="3.00" fill="#d8d4d0"/><rect x="675.80" y="237.70" width="19.20" height="17.60" rx="3.00" fill="#d8d4d0"/><rect x="675.80" y="302.50" width="19.20" height="17.60" rx="3.00" fill="#d8d4d0"/><rect x="675.80" y="405.40" width="19.20" height="17.60" rx="3.00" fill="#d8d4d0"/><rect x="675.80" y="424.60" width="19.20" height="17.60" rx="3.00" fill="#d8d4d0"/></svg>
<svg style="left:0;top:0" width="698" height="567" viewBox="0 0 698 567"><path d="M657.4 56 H662.2 L663.8 57.6 V64.6 H657.4Z" fill="#fdfdfd" stroke="#dcdcde" stroke-width="0.7"/><circle cx="664" cy="60.4" r="2.1" fill="#3f78c4"/><circle cx="664" cy="60.4" r="0.9" fill="#bcd4f2"/><path d="M657.2 75.4 H660.4 L661.2 76.6 H665.8 V83.2 H657.2Z" fill="#caa283" stroke="#a8806a" stroke-width="0.7"/><path d="M659.6 78.2 H665 V80.6 H659.6Z" fill="#f4efe8"/><path d="M657.4 83 L658.6 80 H666 L665.6 83Z" fill="#e6c9a4"/><path d="M660.6 93.4 H662.8 L663.6 97.6 H665.2 L661.7 100 L658.2 97.6 H659.8Z" fill="#e4e6e8" stroke="#70747a" stroke-width="0.6"/><rect x="658" y="98.6" width="7.6" height="3.6" fill="#2f6db4"/><path d="M658.4 100 H665.2" stroke="#d8e8f8" stroke-width="0.7"/><path d="M657.8 102.8 H665.8" stroke="#ccd" stroke-width="0.6"/><rect x="658" y="112.6" width="7" height="1.7" fill="#222"/><rect x="657.3" y="114.2" width="8.4" height="5" rx="0.5" fill="#2c2c2c"/><rect x="658.6" y="115.1" width="5.8" height="1.7" fill="#e4e4e4"/><rect x="658.7" y="118" width="5.6" height="3.7" fill="#fff" stroke="#222" stroke-width="0.8"/><rect x="660.6" y="118.6" width="1.8" height="0.8" fill="#58c058"/><path d="M659.2 139.4 H663.6 L665.6 141.4 V148 H659.2Z" fill="#fafafa" stroke="#1a1a1a" stroke-width="0.9"/><path d="M656.8 143.8 H661.2" stroke="#111" stroke-width="1"/><path d="M660.6 141.8 L663 143.8 L660.6 145.8Z" fill="#111"/><path d="M657.4 158.4 H661.8 L663.8 160.4 V167 H657.4Z" fill="#fafafa" stroke="#1a1a1a" stroke-width="0.9"/><path d="M660 163 H664.4" stroke="#111" stroke-width="1"/><path d="M663.8 161 L666.2 163 L663.8 165Z" fill="#111"/><path d="M658.6 164.6 H661" stroke="#999" stroke-width="0.6"/><path d="M660.4 188.2 H663 Q665.6 188.4 665.4 190.6 Q665 192.6 661.6 192.4" fill="none" stroke="#e3b91c" stroke-width="1.7"/><path d="M661 185.8 V190.8 L657.2 188.3Z" fill="#e8c422" stroke="#b8900c" stroke-width="0.4"/><path d="M662.6 207.4 H660 Q657.4 207.6 657.6 209.8 Q658 211.6 661 211.4" fill="none" stroke="#cfe6cf" stroke-width="1.5"/><path d="M662 205.2 V209.8 L665.8 207.5Z" fill="#cfe6cf"/><rect x="657.4" y="230.8" width="5.6" height="5.6" fill="#f6f6f6" stroke="#6a6a6e" stroke-width="0.8"/><rect x="660.2" y="233.8" width="5.6" height="5.6" fill="#f6f6f6" stroke="#6a6a6e" stroke-width="0.8"/><path d="M659 232.6 h2 M662 235.8 h2" stroke="#999" stroke-width="0.6"/><path d="M658 250.2 L662.6 255.8 M665 250.2 L660.4 255.8" stroke="#8a8f94" stroke-width="1.1"/><circle cx="659.1" cy="256.7" r="1.9" fill="#d8141c"/><circle cx="663.9" cy="256.7" r="1.9" fill="#d8141c"/><rect x="657.4" y="270" width="8.2" height="8" rx="0.6" fill="#f0c48c" stroke="#a87838" stroke-width="0.7"/><rect x="659.8" y="269" width="3.4" height="1.8" fill="#777"/><rect x="660.8" y="272.6" width="4.4" height="4.8" fill="#fbfbfb" stroke="#888" stroke-width="0.5"/><path d="M658.8 271 V277.6" stroke="#c88a3a" stroke-width="0.8"/><use href="#mag" x="661" y="299.6"/><rect x="658.8" y="298.2" width="4.4" height="2.8" fill="#fff" stroke="#778" stroke-width="0.5"/><use href="#mag" x="661" y="318.4"/><path d="M659.4 319.4 L661 316.6 L662.8 319.6Z" fill="#f1d03a" stroke="#776" stroke-width="0.4"/><use href="#mag" x="661" y="337.4"/><rect x="659.6" y="335" width="3" height="4.4" fill="#fff" stroke="#556" stroke-width="0.5"/><rect x="658.6" y="353.8" width="5.6" height="7" fill="#e2e4e8"/><path d="M657.6 354.4 V352.8 H659.2 M663.6 352.8 H665.2 V354.4 M665.2 360.2 V361.8 H663.6 M659.2 361.8 H657.6 V360.2" stroke="#222" stroke-width="0.9" fill="none"/><use href="#dup" x="661.6" y="384.2"/><use href="#dup" x="661.6" y="402.8"/><rect x="661.4" y="403.4" width="3" height="2" fill="#f1d03a" stroke="#5a4a10" stroke-width="0.4"/><path d="M659 400 h2.4" stroke="#334" stroke-width="0.7"/><use href="#dup" x="661.6" y="421.8"/><rect x="661.6" y="422.4" width="2.8" height="1.8" fill="#8fd08f" stroke="#2a5a2a" stroke-width="0.4"/><path d="M659 419 h2.4" stroke="#334" stroke-width="0.7"/><ellipse cx="662.6" cy="446.8" rx="2.8" ry="2.2" fill="#cfe0f4" stroke="#667" stroke-width="0.5"/><rect x="658.8" y="448" width="4.6" height="3.2" fill="#dbe6f4" stroke="#667" stroke-width="0.5"/><use href="#grp" x="661.4" y="448.5"/><ellipse cx="662.8" cy="465.8" rx="2.6" ry="2.2" fill="#cfe0f4" stroke="#667" stroke-width="0.5"/><rect x="658.6" y="467.4" width="4.4" height="3" fill="#f1cf3a" stroke="#6a5a10" stroke-width="0.5"/><use href="#grp" x="661.4" y="467.5"/><path d="M659.6 465.4 L663.4 469.8" stroke="#444" stroke-width="0.5"/><path d="M657.4 490.2 H665.4 V494 Q663.8 498 657.4 498.6Z" fill="#fff" stroke="#111" stroke-width="1"/><path d="M657.4 498.6 V493.4 Q660 497.4 665 494.4 Q663.2 498 657.4 498.6Z" fill="#111"/><path d="M664 490.2 L666 490.2 L666 492.2Z" fill="#e8b81c"/><path d="M660 515.4 L663.2 518.5 L660 521.6Z" fill="#2a2a2a"/><use href="#snapn" x="685.5" y="59.9"/><use href="#snapn" x="685.3" y="86.7"/><path d="M681.4 108.2 H688 V101.8" stroke="#dcdcdc" stroke-width="0.8" fill="none"/><path d="M681.4 127 H688.2 V120.4" stroke="#dcdcdc" stroke-width="0.8" fill="none"/><circle cx="688.2" cy="127" r="1.1" fill="#d6d6d6"/><path d="M681.4 146.4 H688 V141" stroke="#dcdcdc" stroke-width="0.8" fill="none"/><path d="M688 139.8 l1.1 1.4 h-2.2z" fill="#d3dde8"/><path d="M681.4 165.6 H688 V159.6" stroke="#dcdcdc" stroke-width="0.8" fill="none"/><circle cx="683.6" cy="161.2" r="1" fill="#d3dde8"/><use href="#snapn" x="685.3" y="189.9"/><path d="M681.4 205 Q687.2 205.4 687.8 210" fill="none" stroke="#26862f" stroke-width="1"/><path d="M686 209 L690 209.2 L687.8 212.2Z" fill="#26862f"/><path d="M681.2 231 L689.8 223.8" stroke="#222" stroke-width="0.9"/><path d="M683.8 225.8 L687.2 229.4" stroke="#333" stroke-width="0.6"/><path d="M685.5 225.8 L687.2 227.5 L685.5 229.2 L683.8 227.5Z" fill="#2e8b3a"/><path d="M681.6 242 Q686.6 242.6 686.2 248" fill="none" stroke="#333" stroke-width="0.9"/><path d="M686.4 251.6 L690 247.6" stroke="#333" stroke-width="0.7"/><path d="M685.5 247.4 L687.3 249.2 L685.5 251 L683.7 249.2Z" fill="#2e8b3a"/><circle cx="685.5" cy="249.2" r="0.6" fill="#c0e8c4"/><path d="M681.6 261.6 Q686 262.6 686.2 268.4" fill="none" stroke="#333" stroke-width="0.9"/><path d="M684.4 268.6 L689.6 265.8" stroke="#333" stroke-width="0.7"/><path d="M685.5 261.2 L687.2 262.9 L685.5 264.6 L683.8 262.9Z" fill="#2e8b3a"/><path d="M682 288.6 L689 280.8" stroke="#d23446" stroke-width="1.5"/><path d="M685.5 282.8 L687.3 284.7 L685.5 286.6 L683.7 284.7Z" fill="#2e8b3a"/><use href="#snapn" x="685.3" y="311.3"/><path d="M681.4 333.2 H688.2 V326.6" stroke="#bdbdbd" stroke-width="0.8" fill="none"/><circle cx="683.9" cy="329.3" r="1.2" fill="#2e9a40"/><path d="M681.4 352.6 H688.2 V345.8" stroke="#bdbdbd" stroke-width="0.8" fill="none"/><path d="M682.6 348.6 h2.8 M684 347.2 v2.8" stroke="#444" stroke-width="0.7"/><text x="681.2" y="371.6" font-size="10.6" font-weight="bold" fill="#0a0a0a" font-family="Liberation Sans, sans-serif">A</text><path d="M681 372.2 L684.6 371" stroke="#2e9a40" stroke-width="0.9"/><rect x="682.6" y="391.8" width="5.8" height="8" rx="0.5" fill="url(#gw)" stroke="#2a2a2a" stroke-width="0.9"/><path d="M681.2 411.6 H690 M681.2 414.3 H690 M681.2 417 H690" stroke="#3434ea" stroke-width="1.1"/><path d="M682 410 V418.6 M684.4 410 V418.6 M686.8 410 V418.6 M689.2 410 V418.6" stroke="#3434ea" stroke-width="0.9"/><path d="M681.8 429 V437.8 M689 429 V437.8" stroke="#3a3aea" stroke-width="1.3"/><path d="M687.2 429.6 L684 437.4" stroke="#4a4aea" stroke-width="1.1"/></svg>
<svg style="left:0;top:0" width="698" height="567" viewBox="0 0 698 567"><defs><clipPath id="pl"><rect x="0" y="529.3" width="677.9" height="11.5"/></clipPath></defs><g clip-path="url(#pl)">
<rect x="10.30" y="529.3" width="10.66" height="11.5" fill="#000000"/>
<rect x="20.66" y="529.3" width="10.66" height="11.5" fill="#1a1a1a"/>
<rect x="31.01" y="529.3" width="10.66" height="11.5" fill="#333333"/>
<rect x="41.37" y="529.3" width="10.66" height="11.5" fill="#4d4d4d"/>
<rect x="51.72" y="529.3" width="10.66" height="11.5" fill="#666666"/>
<rect x="62.08" y="529.3" width="10.66" height="11.5" fill="#808080"/>
<rect x="72.43" y="529.3" width="10.66" height="11.5" fill="#999999"/>
<rect x="82.78" y="529.3" width="10.66" height="11.5" fill="#b3b3b3"/>
<rect x="93.14" y="529.3" width="10.66" height="11.5" fill="#cccccc"/>
<rect x="103.50" y="529.3" width="10.66" height="11.5" fill="#e6e6e6"/>
<rect x="113.85" y="529.3" width="10.66" height="11.5" fill="#ececec"/>
<rect x="124.20" y="529.3" width="10.66" height="11.5" fill="#f2f2f2"/>
<rect x="134.56" y="529.3" width="10.66" height="11.5" fill="#f9f9f9"/>
<rect x="144.92" y="529.3" width="10.66" height="11.5" fill="#ffffff"/>
<rect x="155.27" y="529.3" width="10.66" height="11.5" fill="#800000"/>
<rect x="165.63" y="529.3" width="10.66" height="11.5" fill="#ff0000"/>
<rect x="175.98" y="529.3" width="10.66" height="11.5" fill="#808000"/>
<rect x="186.34" y="529.3" width="10.66" height="11.5" fill="#ffff00"/>
<rect x="196.69" y="529.3" width="10.66" height="11.5" fill="#008000"/>
<rect x="207.05" y="529.3" width="10.66" height="11.5" fill="#00ff00"/>
<rect x="217.40" y="529.3" width="10.66" height="11.5" fill="#008080"/>
<rect x="227.76" y="529.3" width="10.66" height="11.5" fill="#00ffff"/>
<rect x="238.11" y="529.3" width="10.66" height="11.5" fill="#000080"/>
<rect x="248.47" y="529.3" width="10.66" height="11.5" fill="#0000ff"/>
<rect x="258.82" y="529.3" width="10.66" height="11.5" fill="#800080"/>
<rect x="269.18" y="529.3" width="10.66" height="11.5" fill="#ff00ff"/>
<rect x="279.53" y="529.3" width="10.66" height="11.5" fill="#2b0000"/>
<rect x="289.89" y="529.3" width="10.66" height="11.5" fill="#550000"/>
<rect x="300.24" y="529.3" width="10.66" height="11.5" fill="#800000"/>
<rect x="310.60" y="529.3" width="10.66" height="11.5" fill="#aa0000"/>
<rect x="320.95" y="529.3" width="10.66" height="11.5" fill="#d40000"/>
<rect x="331.31" y="529.3" width="10.66" height="11.5" fill="#ff0000"/>
<rect x="341.66" y="529.3" width="10.66" height="11.5" fill="#ff2a2a"/>
<rect x="352.02" y="529.3" width="10.66" height="11.5" fill="#ff5555"/>
<rect x="362.37" y="529.3" width="10.66" height="11.5" fill="#ff8080"/>
<rect x="372.73" y="529.3" width="10.66" height="11.5" fill="#ffaaaa"/>
<rect x="383.08" y="529.3" width="10.66" height="11.5" fill="#ffd5d5"/>
<rect x="393.44" y="529.3" width="10.66" height="11.5" fill="#280b0b"/>
<rect x="403.79" y="529.3" width="10.66" height="11.5" fill="#501616"/>
<rect x="414.15" y="529.3" width="10.66" height="11.5" fill="#782121"/>
<rect x="424.50" y="529.3" width="10.66" height="11.5" fill="#a02c2c"/>
<rect x="434.86" y="529.3" width="10.66" height="11.5" fill="#c83737"/>
<rect x="445.21" y="529.3" width="10.66" height="11.5" fill="#d35f5f"/>
<rect x="455.57" y="529.3" width="10.66" height="11.5" fill="#de8787"/>
<rect x="465.92" y="529.3" width="10.66" height="11.5" fill="#e9afaf"/>
<rect x="476.28" y="529.3" width="10.66" height="11.5" fill="#f4d7d7"/>
<rect x="486.63" y="529.3" width="10.66" height="11.5" fill="#241c1c"/>
<rect x="496.99" y="529.3" width="10.66" height="11.5" fill="#483737"/>
<rect x="507.34" y="529.3" width="10.66" height="11.5" fill="#6c5353"/>
<rect x="517.70" y="529.3" width="10.66" height="11.5" fill="#916f6f"/>
<rect x="528.05" y="529.3" width="10.66" height="11.5" fill="#ac9393"/>
<rect x="538.40" y="529.3" width="10.66" height="11.5" fill="#c8b7b7"/>
<rect x="548.76" y="529.3" width="10.66" height="11.5" fill="#e3dbdb"/>
<rect x="559.12" y="529.3" width="10.66" height="11.5" fill="#2b1100"/>
<rect x="569.47" y="529.3" width="10.66" height="11.5" fill="#552200"/>
<rect x="579.82" y="529.3" width="10.66" height="11.5" fill="#803300"/>
<rect x="590.18" y="529.3" width="10.66" height="11.5" fill="#aa4400"/>
<rect x="600.53" y="529.3" width="10.66" height="11.5" fill="#d45500"/>
<rect x="610.89" y="529.3" width="10.66" height="11.5" fill="#ff6600"/>
<rect x="621.25" y="529.3" width="10.66" height="11.5" fill="#ff7f2a"/>
<rect x="631.60" y="529.3" width="10.66" height="11.5" fill="#ff9955"/>
<rect x="641.95" y="529.3" width="10.66" height="11.5" fill="#ffb380"/>
<rect x="652.31" y="529.3" width="10.66" height="11.5" fill="#ffccaa"/>
<rect x="662.66" y="529.3" width="10.66" height="11.5" fill="#ffe6d5"/>
<rect x="673.02" y="529.3" width="10.66" height="11.5" fill="#28170b"/>
<rect x="0" y="529.3" width="10.3" height="11.5" fill="#fbfbfb"/><path d="M0.3 529.6 L10 540.5 M10 529.6 L0.3 540.5" stroke="#8b1a1a" stroke-width="1.1"/>
</g></svg>
<svg style="left:0;top:0" width="698" height="567" viewBox="0 0 698 567"><rect x="0.00" y="541.20" width="678.00" height="6.10" fill="#d2d2d2"/><rect x="1.80" y="542.80" width="98.70" height="3.30" rx="2.00" fill="#747474"/></svg>
<svg style="left:685.6px;top:535.2px" width="4.2" height="6.4" viewBox="0 0 5 7"><path d="M5 0 V7 L0 3.5Z" fill="#2e3436"/></svg>
<div class="t" style="left:0.9px;top:549.5px;font-size:6.7px;color:#3a3a3a;transform:scaleX(0.93);transform-origin:0 0">Fill:</div>
<div class="t" style="left:0.9px;top:558.8px;font-size:6.7px;color:#3a3a3a;transform:scaleX(0.93);transform-origin:0 0">Stroke:</div>
<div class="t" style="left:23.2px;top:549.5px;font-size:6.7px;color:#3a3a3a">N/A</div>
<div class="t" style="left:23.2px;top:558.8px;font-size:6.7px;color:#3a3a3a">N/A</div>
<div class="t" style="left:36px;top:554px;font-size:6.7px;color:#3a3a3a">O:</div>
<svg style="left:0;top:0" width="698" height="567" viewBox="0 0 698 567"><rect x="44.30" y="548.50" width="35.50" height="17.50" rx="2.00" fill="#fbfbfa" stroke="#d6d3cf"/></svg>
<div class="t" style="left:45.5px;top:554px;font-size:7px;color:#b3b2b0;transform:scaleX(0.95);transform-origin:0 0">100</div>
<svg style="left:0;top:0" width="698" height="567" viewBox="0 0 698 567"><rect x="60.50" y="549.00" width="1.00" height="16.50" fill="#e6e4e1"/><rect x="70.30" y="549.00" width="1.00" height="16.50" fill="#e6e4e1"/></svg>
<div class="t" style="left:63.3px;top:553.2px;font-size:8px;color:#cfcdca">&#8722;</div>
<div class="t" style="left:73.2px;top:553.2px;font-size:8px;color:#cfcdca">+</div>
<svg style="left:0;top:0" width="698" height="567" viewBox="0 0 698 567"><rect x="103.50" y="549.00" width="1.00" height="17.00" fill="#e6e4e1"/></svg>
<svg style="left:0;top:0" width="698" height="567" viewBox="0 0 698 567"><path d="M110 557 Q114.6 552.8 119.2 557 Q114.6 561 110 557Z" fill="#fff" stroke="#111" stroke-width="0.9"/><circle cx="114.6" cy="557" r="1.9" fill="#111"/><path d="M111 553.6 L110.2 552.2 M113 552.8 L112.6 551.4 M115.4 552.6 L115.6 551.2 M117.6 553.2 L118.4 552" stroke="#111" stroke-width="0.7"/><g transform="translate(134.4 557.4)"><path d="M-3.4 0.2 V-2.4 Q-3.2 -4.6 -0.6 -4.6 Q1.6 -4.6 1.8 -0.8" stroke="#2a2a2a" stroke-width="1" fill="none"/><rect x="-2.4" y="-0.9" width="5.7" height="4.7" rx="0.6" fill="#fff" stroke="#2a2a2a" stroke-width="0.9"/><rect x="0.6" y="-0.4" width="2.3" height="3.7" fill="#e8c61e"/><rect x="-0.2" y="0.8" width="1.1" height="1.5" fill="#222"/></g></svg>
<svg style="left:0;top:0" width="698" height="567" viewBox="0 0 698 567"><rect x="144.70" y="548.50" width="41.60" height="17.00" rx="2.00" fill="#f4f3f1" stroke="#d4d1cd"/></svg>
<div class="t" style="left:150.5px;top:554.3px;font-size:6px;font-weight:bold;color:#2e3436">-Layer 1</div>
<svg style="left:174.5px;top:555.3px" width="6.5" height="4" viewBox="0 0 7 4"><path d="M0 0 H7 L3.5 4 Z" fill="#2e3436"/></svg>
<div class="t" style="left:187.5px;top:555px;font-size:6.75px;color:#3a3a3a">No objects selected. Click, Shift+click, Alt+scroll mouse on top of objects, or drag around objects to select.</div>
<svg style="left:0;top:0" width="698" height="567" viewBox="0 0 698 567"><rect x="512.80" y="549.00" width="1.00" height="17.00" fill="#e6e4e1"/></svg>
<div class="t" style="left:519px;top:549.3px;font-size:6.7px;color:#3a3a3a">X:</div>
<div class="t" style="left:519px;top:558.8px;font-size:6.7px;color:#3a3a3a">Y:</div>
<div class="t" style="left:531.5px;top:549.3px;font-size:6.9px;color:#3a3a3a">218.85</div>
<div class="t" style="left:531.5px;top:558.8px;font-size:6.9px;color:#3a3a3a">243.79</div>
<div class="t" style="left:559px;top:554px;font-size:6.7px;color:#3a3a3a">Z:</div>
<svg style="left:0;top:0" width="698" height="567" viewBox="0 0 698 567"><rect x="570.00" y="548.30" width="49.20" height="17.60" rx="2.00" fill="#fff" stroke="#d6d3cf"/></svg>
<div class="t" style="left:577px;top:554px;font-size:7px;color:#2e3436">70%</div>
<svg style="left:0;top:0" width="698" height="567" viewBox="0 0 698 567"><rect x="595.50" y="549.00" width="1.00" height="16.50" fill="#e6e4e1"/><rect x="607.50" y="549.00" width="1.00" height="16.50" fill="#e6e4e1"/></svg>
<div class="t" style="left:599.3px;top:552.6px;font-size:9px;font-weight:bold;color:#3a3a3a">&#8722;</div>
<div class="t" style="left:610.8px;top:552.6px;font-size:9px;font-weight:bold;color:#3a3a3a">+</div>
<div class="t" style="left:626.5px;top:554px;font-size:6.7px;color:#3a3a3a">R:</div>
<svg style="left:0;top:0" width="698" height="567" viewBox="0 0 698 567"><rect x="636.80" y="548.30" width="54.20" height="17.60" rx="2.00" fill="#fff" stroke="#d6d3cf"/></svg>
<div class="t" style="left:646px;top:554px;font-size:7px;color:#2e3436">0.00&#176;</div>
<svg style="left:0;top:0" width="698" height="567" viewBox="0 0 698 567"><rect x="667.30" y="549.00" width="1.00" height="16.50" fill="#e6e4e1"/><rect x="679.30" y="549.00" width="1.00" height="16.50" fill="#e6e4e1"/></svg>
<div class="t" style="left:670.8px;top:552.6px;font-size:9px;font-weight:bold;color:#3a3a3a">&#8722;</div>
<div class="t" style="left:682.3px;top:552.6px;font-size:9px;font-weight:bold;color:#3a3a3a">+</div>
<svg style="left:0;top:0" width="698" height="567" viewBox="0 0 698 567"><rect x="695.70" y="12.00" width="1.40" height="555.00" fill="#fdfdfd"/><rect x="697.10" y="0.00" width="0.90" height="567.00" fill="#8c8c8c"/><rect x="697.10" y="0.00" width="0.90" height="26.00" fill="#555"/><rect x="0.00" y="566.20" width="698.00" height="0.80" fill="#5a5a5a"/></svg>
</body></html>
